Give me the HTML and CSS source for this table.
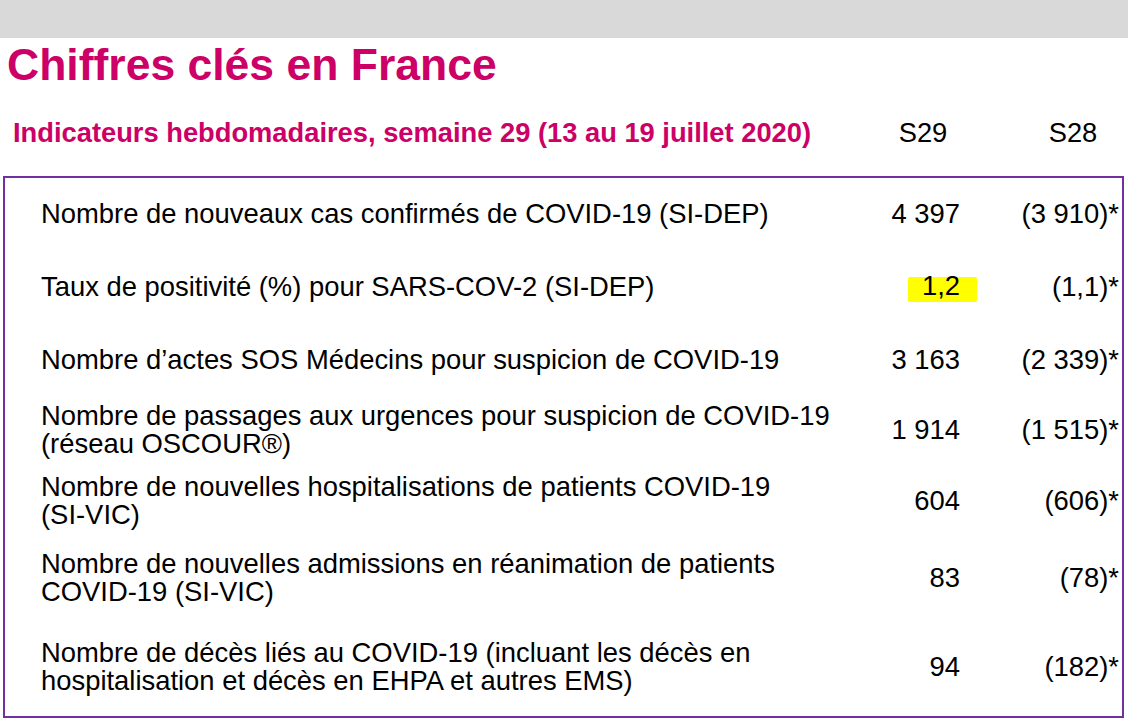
FILE: index.html
```html
<!DOCTYPE html>
<html lang="fr">
<head>
<meta charset="utf-8">
<title>Chiffres clés en France</title>
<link rel="stylesheet" href="styles.css">
</head>
<body>
<div class="topbar"></div>
<h1 class="title">Chiffres clés en France</h1>
<div class="header">
  <div class="subtitle">Indicateurs hebdomadaires, semaine 29 (13 au 19 juillet 2020)</div>
  <div class="col-head">S29</div>
  <div class="col-head">S28</div>
</div>
<div class="box">
  <div class="row">
    <div class="label">Nombre de nouveaux cas confirmés de COVID-19 (SI-DEP)</div>
    <div class="val">4 397</div>
    <div class="prev">(3 910)*</div>
  </div>
  <div class="row">
    <div class="label">Taux de positivité (%) pour SARS-COV-2 (SI-DEP)</div>
    <div class="val"><span class="hl">1,2</span></div>
    <div class="prev">(1,1)*</div>
  </div>
  <div class="row">
    <div class="label">Nombre d’actes SOS Médecins pour suspicion de COVID-19</div>
    <div class="val">3 163</div>
    <div class="prev">(2 339)*</div>
  </div>
  <div class="row">
    <div class="label">Nombre de passages aux urgences pour suspicion de COVID-19<br>(réseau OSCOUR®)</div>
    <div class="val">1 914</div>
    <div class="prev">(1 515)*</div>
  </div>
  <div class="row">
    <div class="label">Nombre de nouvelles hospitalisations de patients COVID-19<br>(SI-VIC)</div>
    <div class="val">604</div>
    <div class="prev">(606)*</div>
  </div>
  <div class="row">
    <div class="label">Nombre de nouvelles admissions en réanimation de patients<br>COVID-19 (SI-VIC)</div>
    <div class="val">83</div>
    <div class="prev">(78)*</div>
  </div>
  <div class="row">
    <div class="label">Nombre de décès liés au COVID-19 (incluant les décès en<br>hospitalisation et décès en EHPA et autres EMS)</div>
    <div class="val">94</div>
    <div class="prev">(182)*</div>
  </div>
</div>
</body>
</html>
```

FILE: styles.css
```css
html, body {
  margin: 0;
  padding: 0;
  background: #ffffff;
}

body {
  width: 1128px;
  height: 721px;
  overflow: hidden;
  font-family: "Liberation Sans", Arial, sans-serif;
  color: #000000;
}

.topbar {
  height: 38px;
  background: #d9d9d9;
}

.title {
  margin: 5px 0 0 7px;
  font-size: 44.5px;
  line-height: 44px;
  font-weight: 700;
  color: #cc0066;
}

.header {
  display: grid;
  grid-template-columns: 1fr 100px 100px;
  column-gap: 50px;
  margin-top: 32px;
  padding: 0 5px 0 13px;
  font-size: 27.3px;
  line-height: 28px;
}

.subtitle {
  font-weight: 700;
  color: #cc0066;
  white-space: nowrap;
}

.col-head {
  text-align: center;
}

.box {
  margin: 29px 4px 0 3px;
  border: 2px solid #7030a0;
  padding: 0 3px 0 36px;
  display: grid;
  grid-template-rows: 72px 74px 72px 68px 74px 80px 98px;
  font-size: 27.4px;
  line-height: 28px;
}

.row {
  display: grid;
  grid-template-columns: 1fr 100px 159px;
  align-items: center;
}

.label {
  white-space: nowrap;
}

.val,
.prev {
  text-align: right;
  white-space: nowrap;
}

.hl {
  display: inline-block;
  background: #ffff00;
  line-height: 18px;
  padding: 0 17px 7px 14px;
  margin-right: -17px;
  border-radius: 2px;
}
```
